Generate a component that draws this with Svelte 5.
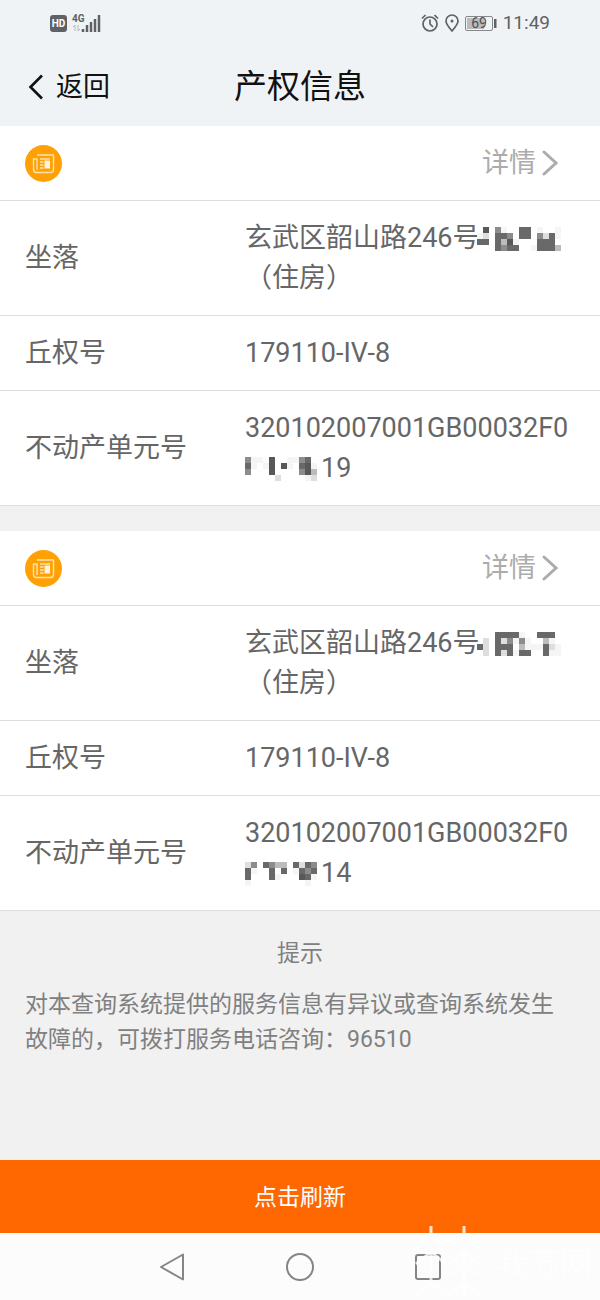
<script lang="ts">
  interface Property {
    address: string;
    addressMask: string[];
    usage: string;
    plotNo: string;
    unitNo: string;
    unitMask: string[];
    unitTail: string;
  }

  // Each letter is one mosaic cell, a is the lightest and f the darkest
  const shades: Record<string, string> = {
    a: '#f5f5f5',
    b: '#dedede',
    c: '#bcbcbc',
    d: '#8c8c8c',
    e: '#696969',
    f: '#585858'
  };

  const cell = 6;

  const properties: Property[] = [
    {
      address: '玄武区韶山路246号',
      addressMask: ['.f.da..ee.a..a', 'ab.eed.ee.dbea', 'ee.ecfa...eee.', '...edee..aeeec'],
      usage: '（住房）',
      plotNo: '179110-IV-8',
      unitNo: '320102007001GB00032F0',
      unitMask: ['daa.f..aade.', 'ea.af.fa.efa', 'd...f....dfc', '.....b....ab'],
      unitTail: '19'
    },
    {
      address: '玄武区韶山路246号',
      addressMask: ['...eeeea..eee.', '.b.ebdada..ca.', 'eb.eee.caaaeba', '.b.ebeaee..eaa'],
      usage: '（住房）',
      plotNo: '179110-IV-8',
      unitNo: '320102007001GB00032F0',
      unitMask: ['bd.edcc.ebed', 'ea..e.e.aede', 'e...ea...fea', 'a.........a.'],
      unitTail: '14'
    }
  ];
</script>

{#snippet mosaic(rows: string[])}
  <svg class="mosaic" width={rows[0].length * cell} height={rows.length * cell} shape-rendering="crispEdges" aria-hidden="true">
    {#each rows as row, y}
      {#each row.split('') as shade, x}
        {#if shades[shade]}
          <rect x={x * cell} y={y * cell} width={cell} height={cell} fill={shades[shade]} />
        {/if}
      {/each}
    {/each}
  </svg>
{/snippet}

<div class="page">
  <div class="status">
    <div class="status-group">
      <svg width="52" height="20" viewBox="0 0 52 20" aria-hidden="true">
        <rect x="0" y="2" width="17" height="17" rx="3" fill="#5f6264" />
        <text x="8.500" y="14" text-anchor="middle" class="hd">HD</text>
        <text x="22" y="9" class="network">4G</text>
        <path d="M25 18v-6l-2 2M28 12v6l2-2" fill="none" stroke="#b5b8ba" />
        <path d="M33 19v-3M37 19v-7M41 19V9M45 19V6M49 19V2" stroke="#5f6264" stroke-width="2.500" />
      </svg>
    </div>
    <div class="status-group">
      <svg width="18" height="20" viewBox="0 0 18 20" fill="none" stroke="#5f6264" stroke-width="1.700" aria-hidden="true">
        <circle cx="9" cy="11" r="7" />
        <path d="M9 6.500V11l3 3M1 5.500L4.500 2M17 5.500L13.500 2" />
      </svg>
      <svg width="14" height="20" viewBox="0 0 14 20" fill="none" stroke="#5f6264" stroke-width="1.700" aria-hidden="true">
        <path d="M7 18C3.500 14 1 11 1 8a6 6 0 0 1 12 0c0 3-2.500 6-6 10z" />
        <circle cx="7" cy="8" r="1.500" fill="#5f6264" stroke="none" />
      </svg>
      <svg width="32" height="20" viewBox="0 0 32 20" aria-hidden="true">
        <rect x="0.500" y="3.500" width="27" height="14" rx="1.500" fill="none" stroke="#85888a" />
        <rect x="2" y="5" width="17" height="11" fill="#b9bbbd" />
        <rect x="29" y="6" width="2.500" height="9" fill="#5f6264" />
        <text x="14" y="15" text-anchor="middle" class="battery">69</text>
      </svg>
      <span>11:49</span>
    </div>
  </div>

  <header>
    <button class="back">
      <svg width="16" height="26" viewBox="0 0 16 26" fill="none" stroke="#111" stroke-width="2.600" aria-hidden="true">
        <path d="M14 1.500L2.500 13L14 24.500" />
      </svg>
      返回
    </button>
    <h1>产权信息</h1>
  </header>

  <main>
    {#each properties as property}
      <section class="card">
        <div class="card-head">
          <svg width="37" height="37" viewBox="0 0 37 37" aria-hidden="true">
            <circle cx="18.500" cy="18.500" r="18.500" fill="#ffa005" />
            <g fill="none" stroke="#ffe3ae" stroke-width="1.400">
              <path d="M12 10h16.500v14.500a3 3 0 0 1-3 3H11.500a3 3 0 0 1-3-3V14H12v11" />
              <path d="M15 14h10M15 17h3.500M15 20h3.500M15 23h3.500" />
            </g>
            <rect x="19.500" y="15.500" width="5.500" height="8" fill="#fff3dc" />
          </svg>
          <a href="#detail">
            详情
            <svg width="16" height="26" viewBox="0 0 16 26" fill="none" stroke="#acacac" stroke-width="3" stroke-linecap="round" aria-hidden="true">
              <path d="M2 2l12 11L2 24" />
            </svg>
          </a>
        </div>
        <dl>
          <div class="row">
            <dt>坐落</dt>
            <dd>{property.address}<span class="covered">{@render mosaic(property.addressMask)}</span>{property.usage}</dd>
          </div>
          <div class="row">
            <dt>丘权号</dt>
            <dd>{property.plotNo}</dd>
          </div>
          <div class="row">
            <dt>不动产单元号</dt>
            <dd>{property.unitNo}{@render mosaic(property.unitMask)}<span class="tail">{property.unitTail}</span></dd>
          </div>
        </dl>
      </section>
    {/each}

    <section class="notice">
      <h2>提示</h2>
      <p>对本查询系统提供的服务信息有异议或查询系统发生故障的，可拨打服务电话咨询：96510</p>
    </section>
  </main>

  <button class="refresh">点击刷新</button>

  <nav>
    <button aria-label="返回">
      <svg width="28" height="28" viewBox="0 0 28 28" fill="none" stroke="#858585" stroke-width="2" stroke-linejoin="round">
        <path d="M25 1.500v25L3 14z" />
      </svg>
    </button>
    <button aria-label="主页">
      <svg width="28" height="28" viewBox="0 0 28 28" fill="none" stroke="#858585" stroke-width="2">
        <circle cx="14" cy="14" r="13" />
      </svg>
    </button>
    <button aria-label="最近">
      <svg width="28" height="28" viewBox="0 0 28 28" fill="none" stroke="#858585" stroke-width="2">
        <rect x="2" y="2" width="24" height="24" rx="2" />
      </svg>
    </button>
    <div class="watermark">
      <svg width="66" height="70" viewBox="0 0 66 70" fill="none" stroke="#fff" stroke-width="3" aria-hidden="true">
        <path d="M17 0v8M2 22l15-12 15 12M2 38l15-12 15 12M17 26v28M2 69l15-12 15 12" />
        <path d="M50 0v8M35 22l15-12 15 12M35 38l15-12 15 12M50 26v44M35 48l15-9 15 9M35 69l15-12 15 12" />
      </svg>
      <span>我苏网</span>
    </div>
  </nav>
</div>

<style>
  :global(body) {
    margin: 0;
    background: #f1f1f1;
  }

  .page {
    display: flex;
    flex-direction: column;
    min-height: 100vh;
    font-family: Roboto, "Noto Sans CJK SC", sans-serif;
    color: #666;
  }

  button {
    border: 0;
    padding: 0;
    background: none;
    font-family: inherit;
    cursor: pointer;
  }

  svg {
    flex: none;
  }

  .status {
    display: flex;
    justify-content: space-between;
    align-items: center;
    height: 45px;
    padding: 0 50px;
    background: #f0f3f6;
    color: #5f6264;
    font-size: 19px;
  }

  .status-group {
    display: flex;
    align-items: center;
    gap: 6px;
  }

  .hd {
    font-size: 10px;
    font-weight: 700;
    fill: #fff;
  }

  .network {
    font-size: 10px;
    font-weight: 700;
    fill: #5f6264;
  }

  .battery {
    font-size: 14px;
    fill: #4d5052;
  }

  header {
    display: grid;
    grid-template-columns: 1fr auto 1fr;
    align-items: center;
    height: 79px;
    padding: 2px 28px 0;
    background: #f0f3f6;
    color: #111;
  }

  .back {
    display: flex;
    align-items: center;
    gap: 12px;
    color: #111;
    font-size: 27px;
    line-height: 40px;
  }

  h1 {
    margin: 0;
    font-size: 33px;
    font-weight: 400;
    line-height: 44px;
  }

  main {
    flex: 1;
  }

  .card {
    background: #fff;
  }

  .card + .card {
    margin-top: 25px;
  }

  .card-head {
    display: flex;
    justify-content: space-between;
    align-items: center;
    height: 74px;
    padding: 0 42px 0 25px;
    border-bottom: 1px solid #dedede;
  }

  .card-head a {
    display: flex;
    align-items: center;
    gap: 6px;
    color: #acacac;
    font-size: 27px;
    line-height: 40px;
    text-decoration: none;
  }

  dl {
    margin: 0;
  }

  .row {
    display: grid;
    grid-template-columns: 220px 1fr;
    align-items: center;
    padding: 17px 25px;
    border-bottom: 1px solid #dedede;
    font-size: 27px;
    line-height: 40px;
  }

  dd {
    margin: 0;
    word-break: break-all;
  }

  .mosaic {
    vertical-align: -4px;
  }

  .covered {
    margin-left: -3px;
  }

  .tail {
    margin-left: 4px;
  }

  .notice {
    padding: 25px;
    color: #808080;
    font-size: 23px;
    line-height: 35px;
  }

  .notice h2 {
    margin: 0 0 16px;
    font-size: 23px;
    font-weight: 400;
    text-align: center;
  }

  .notice p {
    margin: 0;
  }

  .refresh {
    height: 73px;
    padding-bottom: 4px;
    background: #ff6700;
    color: #fff;
    font-size: 23px;
  }

  nav {
    position: relative;
    display: flex;
    justify-content: center;
    align-items: center;
    gap: 100px;
    height: 67px;
    background: #fcfcfc;
  }

  nav button {
    display: flex;
  }

  .watermark {
    position: absolute;
    right: 8px;
    bottom: 4px;
    display: flex;
    align-items: center;
    gap: 16px;
    color: #fff;
    font-size: 32px;
    opacity: 0.8;
    pointer-events: none;
  }
</style>
